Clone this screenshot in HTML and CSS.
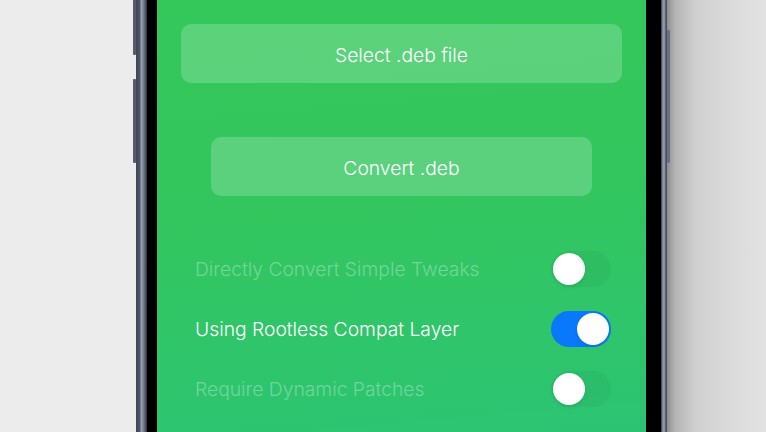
FILE: index.html
```html
<!DOCTYPE html>
<html lang="en">
<head>
    <meta charset="UTF-8">
    <meta name="viewport" content="width=device-width, initial-scale=1.0">
    <title>Deb Converter</title>
    <link rel="stylesheet" href="styles.css">
</head>
<body>

    <div class="stage">

        <div class="backdrop-left"></div>

        <div class="phone">
            <div class="side-button side-button-top"></div>
            <div class="side-button side-button-volume"></div>
            <div class="side-button side-button-power"></div>

            <div class="bezel">
                <div class="screen">

                    <button class="action-button wide">Select .deb file</button>
                    <button class="action-button narrow">Convert .deb</button>

                    <div class="options">
                        <div class="option-row disabled">
                            <span class="option-label">Directly Convert Simple Tweaks</span>
                            <div class="toggle"><div class="knob"></div></div>
                        </div>
                        <div class="option-row">
                            <span class="option-label">Using Rootless Compat Layer</span>
                            <div class="toggle on"><div class="knob"></div></div>
                        </div>
                        <div class="option-row disabled">
                            <span class="option-label">Require Dynamic Patches</span>
                            <div class="toggle"><div class="knob"></div></div>
                        </div>
                    </div>

                </div>
            </div>
        </div>

        <div class="backdrop-right"></div>

    </div>

</body>
</html>
```

FILE: styles.css
```css
body{
    margin: 0;
    background-color: #ececec;
    font-family: Inter, "Open Sans", sans-serif;
    overflow: hidden;
}

.stage{
    display: flex;
    height: 432px;
    width: 766px;
}

.backdrop-left{
    width: 136px;
    background-color: #ececec;
}

.backdrop-right{
    flex: 1;
    background: linear-gradient(to right, #8e8e8e 0px, #b4b4b4 8px, #cfcfcf 28px, #dadada 60px, #e2e2e2 100%);
}

.phone{
    position: relative;
    display: flex;
    padding: 0 6px 0 11px;
    background: linear-gradient(to right,
        #3f4554 0px, #4f5666 4px, #9ea5b4 5px, #7d8596 7px, #596071 9px, #2b2f38 11px,
        #2b2f38 calc(100% - 6px), #6a7283 calc(100% - 5px), #a0a7b6 calc(100% - 3px), #4a5060 calc(100% - 1px));
}

.side-button{
    position: absolute;
    width: 3px;
    background-color: #555b6a;
    border-radius: 1px;
}

.side-button-top{
    left: -3px;
    top: -10px;
    height: 65px;
}

.side-button-volume{
    left: -3px;
    top: 79px;
    height: 84px;
}

.side-button-power{
    right: -3px;
    top: 30px;
    height: 133px;
    background-color: #6a7080;
}

.bezel{
    display: flex;
    padding: 0 15px 0 10px;
    background-color: #000;
}

.screen{
    width: 489px;
    display: flex;
    flex-direction: column;
    align-items: center;
    padding-top: 24px;
    box-sizing: border-box;
    background: linear-gradient(175deg, #34c75a 0%, #33c65e 45%, #2cc474 100%);
}

.action-button{
    height: 59px;
    border: none;
    border-radius: 10px;
    background-color: rgba(255, 255, 255, 0.2);
    color: #fff;
    font-family: inherit;
    font-size: 19.3px;
    font-weight: 350;
    padding: 2px 0 0 0;
}

.wide{
    width: 441px;
}

.narrow{
    width: 381px;
    margin-top: 54px;
}

.options{
    align-self: stretch;
    display: flex;
    flex-direction: column;
    gap: 24px;
    margin-top: 55px;
    padding: 0 35px 0 38px;
}

.option-row{
    display: flex;
    align-items: center;
    justify-content: space-between;
    height: 36px;
}

.option-label{
    color: #fff;
    font-size: 19.3px;
    font-weight: 350;
}

.disabled .option-label{
    color: rgba(255, 255, 255, 0.33);
}

.toggle{
    width: 60px;
    height: 36px;
    border-radius: 18px;
    background-color: rgba(0, 0, 0, 0.04);
    display: flex;
    align-items: center;
    padding: 0 2px;
    box-sizing: border-box;
}

.toggle .knob{
    width: 32px;
    height: 32px;
    border-radius: 50%;
    background-color: #fff;
    box-shadow: 0 2px 4px rgba(0, 0, 0, 0.08);
}

.toggle.on{
    background-color: #0a78fa;
    justify-content: flex-end;
}
```
